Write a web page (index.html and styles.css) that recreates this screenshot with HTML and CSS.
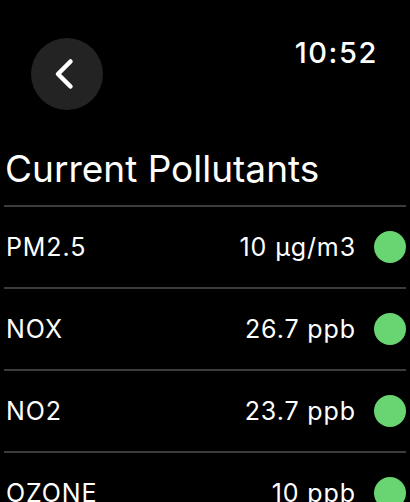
FILE: index.html
```html
<!DOCTYPE html>
<html lang="en">
<head>
<meta charset="utf-8">
<title>Current Pollutants</title>
<link rel="stylesheet" href="styles.css">
</head>
<body>
<header class="top">
  <button class="back" aria-label="Back">
    <svg width="72" height="72" viewBox="0 0 72 72" aria-hidden="true">
      <path d="M39.5 23.5 L27 36 L39.5 48.5" fill="none" stroke="#fff" stroke-width="4.5" stroke-linecap="round" stroke-linejoin="round"/>
    </svg>
  </button>
  <div class="time">10:52</div>
</header>
<h1 class="title">Current Pollutants</h1>
<ul class="list">
  <li class="row"><span class="name">PM2.5</span><span class="val">10 µg/m3</span><span class="dot"></span></li>
  <li class="row"><span class="name">NOX</span><span class="val">26.7 ppb</span><span class="dot"></span></li>
  <li class="row"><span class="name">NO2</span><span class="val">23.7 ppb</span><span class="dot"></span></li>
  <li class="row"><span class="name">OZONE</span><span class="val">10 ppb</span><span class="dot"></span></li>
</ul>
</body>
</html>
```

FILE: styles.css
```css
html, body {
  margin: 0;
  padding: 0;
  background: #000;
  color: #fff;
  font-family: Inter, "Liberation Sans", sans-serif;
  overflow: hidden;
}
.top {
  display: flex;
  justify-content: space-between;
  align-items: flex-start;
  padding: 38px 32px 0 31px;
}
.back {
  width: 72px;
  height: 72px;
  border-radius: 50%;
  background: #232323;
  border: 0;
  padding: 0;
  display: block;
}
.back svg { display: block; }
.time {
  font-size: 29px;
  line-height: 29px;
  font-weight: 500;
  letter-spacing: 1.6px;
}
.title {
  margin: 40px 4px 18px;
  font-size: 37px;
  line-height: 37px;
  font-weight: 400;
  padding-left: 1px;
}
.list {
  list-style: none;
  margin: 0 4px;
  padding: 0;
}
.row {
  display: flex;
  align-items: center;
  height: 80px;
  border-top: 2px solid #3c3c3c;
  font-size: 25px;
  letter-spacing: 0.9px;
}
.name {
  flex: 1;
  padding-left: 2px;
}
.val {
  margin-right: 18px;
}
.dot {
  width: 32px;
  height: 32px;
  border-radius: 50%;
  background: #68d572;
}
```
